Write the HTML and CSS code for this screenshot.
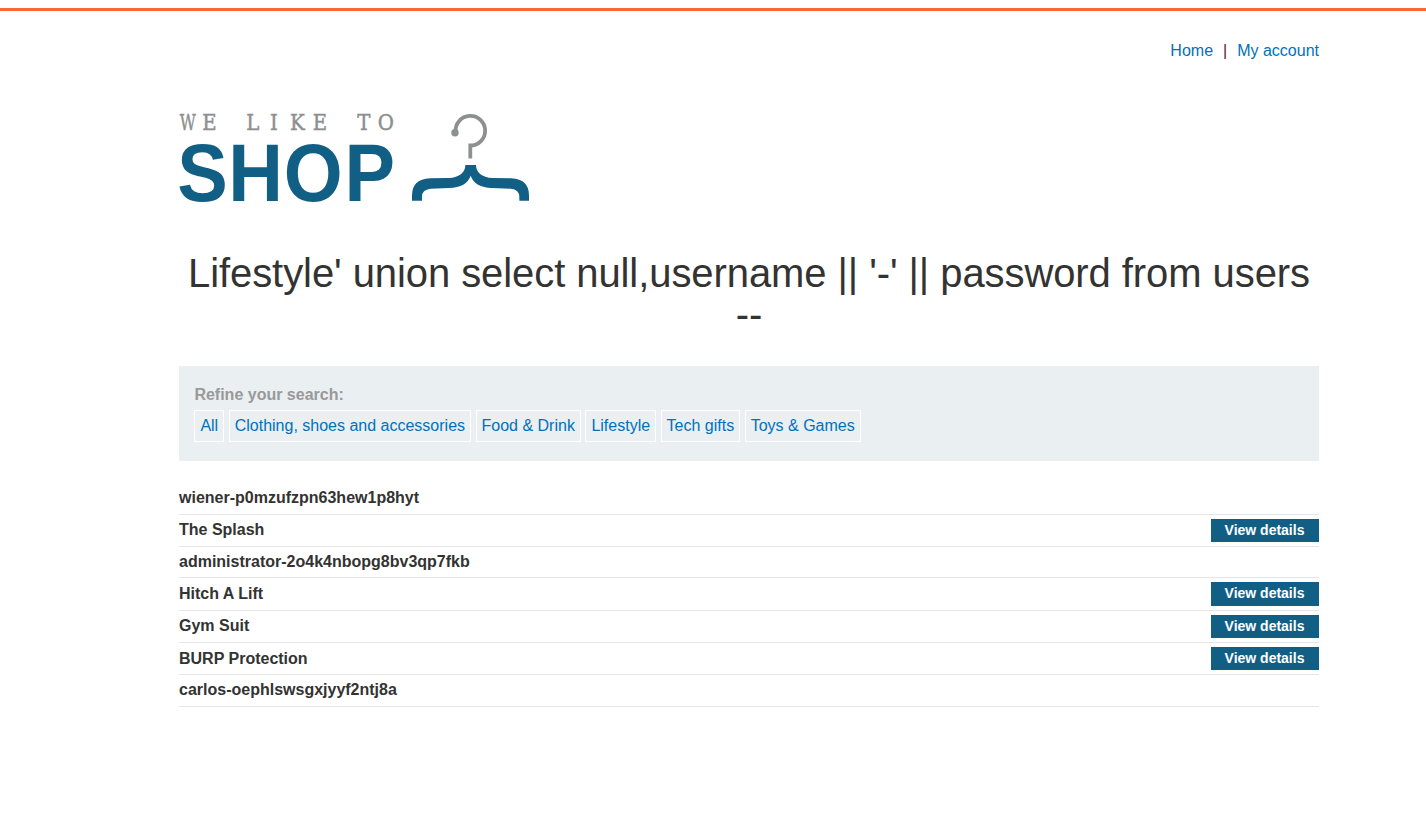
FILE: index.html
```html
<!DOCTYPE html>
<html lang="en">
<head>
<meta charset="utf-8">
<title>We Like to Shop</title>
<link rel="stylesheet" href="styles.css">
</head>
<body>
<div class="top-line"></div>
<div class="container">
  <nav class="top-links"><a href="#">Home</a><span class="divider">|</span><a href="#">My account</a></nav>
  <header class="brand">
    <svg class="logo" width="352" height="92" viewBox="0 0 352 92" role="img" aria-label="We like to shop">
      <g class="tagline">
        <text y="16.7" x=".8" textLength="16" lengthAdjust="spacingAndGlyphs">W</text>
        <text y="16.7" transform="scale(.92 1)" x="25.2">E</text>
        <text y="16.7" transform="scale(.92 1)" x="73.2 98.8 120.7 145.3">LIKE</text>
        <text y="16.7" transform="scale(.92 1)" x="193.7 216">TO</text>
      </g>
      <text class="shop" transform="scale(.935 1)" y="88" x="-2 52.6 112 177">SHOP</text>
      <path class="hook" d="M276.6 18.9A14.8 14.8 0 1 1 291.3 32.5V45.5"/>
      <circle class="hook-end" cx="276" cy="19.8" r="3.7"/>
      <path class="bar" transform="translate(221 -13) scale(.33333)" d="M36 302V286Q36 238 90 235L145 234C180 233 196 216 196 195H228C228 216 244 233 279 234L334 235Q387 238 387 286V302H358V291Q358 268 332 266L276 264Q224 262 212 227Q200 262 147 264L91 266Q66 269 66 290V302Z"/>
    </svg>
  </header>
  <h1>Lifestyle' union select null,username || '-' || password from users --</h1>
  <section class="filters">
    <div class="filter-label">Refine your search:</div>
    <div class="filter-list"><a href="#">All</a><a href="#">Clothing, shoes and accessories</a><a href="#">Food &amp; Drink</a><a href="#">Lifestyle</a><a href="#">Tech gifts</a><a href="#">Toys &amp; Games</a></div>
  </section>
  <main class="products">
    <div class="row raised">wiener-p0mzufzpn63hew1p8hyt</div>
    <div class="row raised"><span>The Splash</span><a class="button" href="#">View details</a></div>
    <div class="row short">administrator-2o4k4nbopg8bv3qp7fkb</div>
    <div class="row tall"><span>Hitch A Lift</span><a class="button" href="#">View details</a></div>
    <div class="row raised"><span>Gym Suit</span><a class="button" href="#">View details</a></div>
    <div class="row"><span>BURP Protection</span><a class="button" href="#">View details</a></div>
    <div class="row raised">carlos-oephlswsgxjyyf2ntj8a</div>
  </main>
</div>
</body>
</html>
```
FILE: styles.css
```css
* { box-sizing: border-box; }
body { margin: 0; background: #fff; color: #333332; font: 16px/18px "Liberation Sans", Arial, sans-serif; }
a { color: #0071bc; text-decoration: none; }
.top-line { height: 3px; margin-top: 8px; background: #ff6633; }
.container { width: 1140px; margin-left: 179px; }
.top-links { display: flex; justify-content: flex-end; padding-top: 31px; height: 102px; }
.divider { margin: 0 10px; color: #5c162e; }
.brand { height: 92px; }
.logo { display: block; overflow: visible; }
.tagline { font-family: "DejaVu Serif", serif; font-size: 21.5px; fill: #8e8f8f; stroke: #8e8f8f; stroke-width: .45; }
.shop { font-size: 81px; font-weight: bold; fill: #125f85; }
.hook { fill: none; stroke: #8e8f8f; stroke-width: 3.8; }
.hook-end { fill: #8e8f8f; }
.bar { fill: #125f85; }
h1 { margin: 47px 0 30px; height: 84px; padding-top: 1px; font-size: 40px; line-height: 41px; letter-spacing: -.078px; font-weight: normal; text-align: center; }
.filters { height: 95px; padding: 20px 15.4px; background: #eaeff2; }
.filter-label { color: #999; font-weight: bold; margin-bottom: 6px; }
.filter-list { display: flex; gap: 4.5px; }
.filter-list a { height: 32px; padding: 6px 5px; border: 1px solid #fff; }
.products { padding-top: 22px; font-weight: bold; }
.row { display: flex; justify-content: space-between; align-items: center; height: 32px; border-bottom: 1px solid #e5e5e5; }
.row:not(:has(.button)).raised, .raised span { padding-bottom: 2px; }
.row.short { height: 31px; }
.row.tall { height: 33px; }
.button { height: 23px; width: 108px; background: #125f85; color: #fff; font-size: 14px; line-height: 22px; padding-right: 1px; text-align: center; }
.tall .button { height: 24px; }
```
